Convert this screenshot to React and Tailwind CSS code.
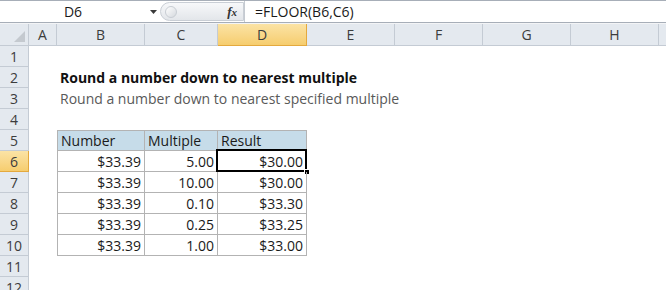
const cols = [
  { name: "A", w: "w-[28px]" },
  { name: "B", w: "w-[88px]" },
  { name: "C", w: "w-[73px]" },
  { name: "D", w: "w-[89px]" },
  { name: "E", w: "w-[88px]" },
  { name: "F", w: "w-[88px]" },
  { name: "G", w: "w-[88px]" },
  { name: "H", w: "w-[88px]" },
];

const data = [
  ["$33.39", "5.00", "$30.00"],
  ["$33.39", "10.00", "$30.00"],
  ["$33.39", "0.10", "$33.30"],
  ["$33.39", "0.25", "$33.25"],
  ["$33.39", "1.00", "$33.00"],
];

function RowHead({ n, active }) {
  return (
    <div
      className={
        "w-[29px] shrink-0 h-full flex items-center justify-center border-r border-b text-[#3c3c3c] " +
        (active
          ? "bg-gradient-to-b from-[#fbe3a5] to-[#f6cd6e] border-[#e4a93e]"
          : "bg-[#e4e9ef] border-[#c4cbd4]")
      }
    >
      {n}
    </div>
  );
}

function Row({ n, active, children }) {
  return (
    <div className="flex h-[21px] shrink-0">
      <RowHead n={n} active={active} />
      {children}
    </div>
  );
}

function Empty({ w }) {
  return <div className={w + " shrink-0 h-full"} />;
}

function TableCell({ w, first, top, head, right, activeCell, children }) {
  return (
    <div
      className={
        w +
        " shrink-0 h-full relative flex items-center px-[3px] border-r border-b border-[#b3b3b3] " +
        (first ? "border-l " : "") +
        (top ? "border-t " : "") +
        (head ? "bg-[#c6dce9] text-[#1a1a1a] " : "text-[#1a1a1a] ") +
        (right ? "justify-end" : "justify-start")
      }
    >
      {children}
      {activeCell && (
        <>
          <div className="absolute -top-[2px] -left-[2px] -right-[1px] -bottom-[1px] border-2 border-black" />
          <div className="absolute -right-[4px] -bottom-[4px] w-[6px] h-[6px] bg-black border border-white" />
        </>
      )}
    </div>
  );
}

export default function App() {
  return (
    <div
      className="w-[666px] h-[290px] overflow-hidden bg-white text-[14px] flex flex-col"
      style={{ fontFamily: "'Open Sans', 'Liberation Sans', sans-serif" }}
    >
      {/* formula bar */}
      <div className="flex h-[23px] shrink-0 border-t border-b border-[#a7aeb8] bg-white">
        <div className="w-[146px] flex items-center justify-center text-[#1a1a1a]">D6</div>
        <div className="w-[14px] flex items-center justify-center">
          <svg width="7" height="4" viewBox="0 0 7 4">
            <path d="M0 0h7L3.5 4z" fill="#3a3a3a" />
          </svg>
        </div>
        <div className="w-[84px] my-[1px] rounded-l-full border border-[#c9ced5] bg-gradient-to-b from-[#f7f8fa] to-[#e3e6ea] flex items-center justify-end pr-[6px] relative">
          <div className="absolute left-[4px] top-[3px] w-[12px] h-[12px] rounded-full bg-gradient-to-br from-white to-[#d5d9de] border border-[#c8cdd3]" />
          <span
            className="italic font-bold text-[13px] text-[#333]"
            style={{ fontFamily: "'Liberation Serif', serif" }}
          >
            f<span className="text-[11px]">x</span>
          </span>
        </div>
        <div className="w-px bg-[#c5cad1]" />
        <div className="flex-1 flex items-center pl-[10px] text-[#1a1a1a]">=FLOOR(B6,C6)</div>
      </div>

      {/* spacer */}
      <div className="h-[1px] shrink-0 bg-[#f3f4f6]" />

      {/* column headers */}
      <div className="flex h-[22px] shrink-0">
        <div className="w-[29px] shrink-0 h-full bg-[#e4e9ef] border-r border-b border-[#c4cbd4] relative">
          <svg className="absolute right-[3px] bottom-[3px]" width="11" height="11" viewBox="0 0 11 11">
            <path d="M11 0v11H0z" fill="#c4c9cf" />
          </svg>
        </div>
        {cols.map((c) => (
          <div
            key={c.name}
            className={
              c.w +
              " shrink-0 h-full flex items-center justify-center border-r border-b text-[#3c3c3c] " +
              (c.name === "D"
                ? "bg-gradient-to-b from-[#fbe3a5] to-[#f6cd6e] border-[#e4a93e]"
                : "bg-[#e4e9ef] border-[#c4cbd4]")
            }
          >
            {c.name}
          </div>
        ))}
        <div className="flex-1 h-full bg-[#e4e9ef] border-b border-[#c4cbd4]" />
      </div>

      <Row n={1} />
      <Row n={2}>
        <Empty w="w-[28px]" />
        <div className="w-[88px] shrink-0 h-full flex items-center px-[3px] whitespace-nowrap font-bold text-[#111]">
          Round a number down to nearest multiple
        </div>
      </Row>
      <Row n={3}>
        <Empty w="w-[28px]" />
        <div className="w-[88px] shrink-0 h-full flex items-center px-[3px] whitespace-nowrap text-[#595959]">
          Round a number down to nearest specified multiple
        </div>
      </Row>
      <Row n={4} />
      <Row n={5}>
        <Empty w="w-[28px]" />
        <TableCell w="w-[88px]" first top head>Number</TableCell>
        <TableCell w="w-[73px]" top head>Multiple</TableCell>
        <TableCell w="w-[89px]" top head>Result</TableCell>
      </Row>
      {data.map((r, i) => (
        <Row key={i} n={6 + i} active={i === 0}>
          <Empty w="w-[28px]" />
          <TableCell w="w-[88px]" first right>{r[0]}</TableCell>
          <TableCell w="w-[73px]" right>{r[1]}</TableCell>
          <TableCell w="w-[89px]" right activeCell={i === 0}>{r[2]}</TableCell>
        </Row>
      ))}
      <Row n={11} />
      <Row n={12} />
    </div>
  );
}
